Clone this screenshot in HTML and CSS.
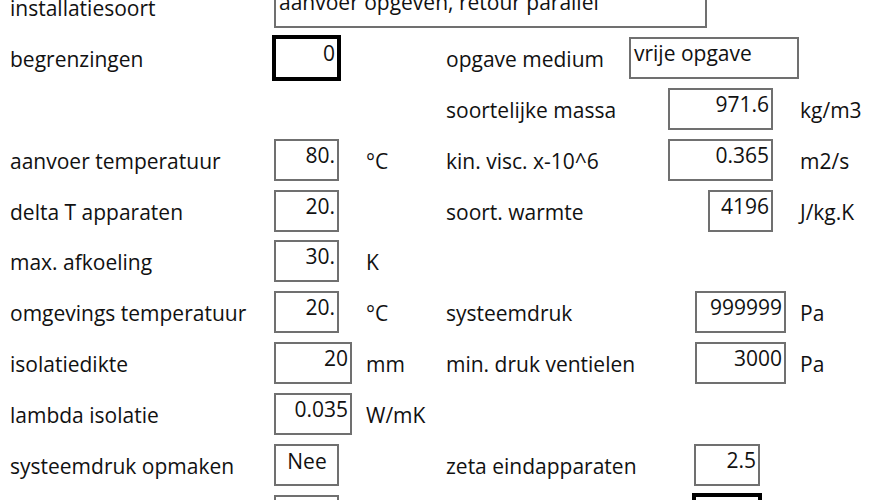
FILE: index.html
```html
<!DOCTYPE html>
<html>
<head>
<meta charset="utf-8">
<link rel="stylesheet" href="styles.css">
</head>
<body>
<div class="form">
  <div class="row">
    <span class="lbl c1">installatiesoort</span>
    <div class="box wide left c2s">aanvoer opgeven, retour parallel</div>
  </div>
  <div class="row">
    <span class="lbl c1">begrenzingen</span>
    <div class="box w65 focus c2">0</div>
    <span class="lbl c4">opgave medium</span>
    <div class="box w170 left c5">vrije opgave</div>
  </div>
  <div class="row">
    <span class="lbl c4">soortelijke massa</span>
    <div class="box w105 off39 c5">971.6</div>
    <span class="lbl c6">kg/m3</span>
  </div>
  <div class="row">
    <span class="lbl c1">aanvoer temperatuur</span>
    <div class="box w65 c2">80.</div>
    <span class="lbl c3">°C</span>
    <span class="lbl c4">kin. visc. x-10^6</span>
    <div class="box w105 off39 c5">0.365</div>
    <span class="lbl c6">m2/s</span>
  </div>
  <div class="row">
    <span class="lbl c1">delta T apparaten</span>
    <div class="box w65 c2">20.</div>
    <span class="lbl c4">soort. warmte</span>
    <div class="box w65 off79 c5">4196</div>
    <span class="lbl c6">J/kg.K</span>
  </div>
  <div class="row">
    <span class="lbl c1">max. afkoeling</span>
    <div class="box w65 c2">30.</div>
    <span class="lbl c3">K</span>
  </div>
  <div class="row">
    <span class="lbl c1">omgevings temperatuur</span>
    <div class="box w65 c2">20.</div>
    <span class="lbl c3">°C</span>
    <span class="lbl c4">systeemdruk</span>
    <div class="box w91 off66 c5">999999</div>
    <span class="lbl c6">Pa</span>
  </div>
  <div class="row">
    <span class="lbl c1">isolatiedikte</span>
    <div class="box w78 c2">20</div>
    <span class="lbl c3">mm</span>
    <span class="lbl c4">min. druk ventielen</span>
    <div class="box w91 off66 c5">3000</div>
    <span class="lbl c6">Pa</span>
  </div>
  <div class="row">
    <span class="lbl c1">lambda isolatie</span>
    <div class="box w78 c2">0.035</div>
    <span class="lbl c3">W/mK</span>
  </div>
  <div class="row">
    <span class="lbl c1">systeemdruk opmaken</span>
    <div class="box w65 center c2">Nee</div>
    <span class="lbl c4">zeta eindapparaten</span>
    <div class="box w66 off65 c5">2.5</div>
  </div>
  <div class="row">
    <div class="box w65 c2"></div>
    <div class="box w66 off65 focus c5"></div>
  </div>
</div>
</body>
</html>
```
FILE: styles.css
```css
html, body {
  margin: 0;
  padding: 0;
  background: #ffffff;
  overflow: hidden;
}
body {
  width: 888px;
  height: 500px;
  font-family: "Open Sans", "Noto Sans", sans-serif;
  font-size: 21px;
  color: #111111;
}
.form {
  margin-top: -14px;
  padding-left: 10px;
}
.row {
  display: grid;
  grid-template-columns: 264px 92px 80px 183px 171px 1fr;
  height: 42px;
  margin-bottom: 8.9px;
}
.lbl {
  line-height: 28px;
  padding-top: 8px;
  white-space: nowrap;
}
.c1 { grid-column: 1; }
.c2 { grid-column: 2; }
.c2s { grid-column: 2 / span 4; }
.c3 { grid-column: 3; }
.c4 { grid-column: 4; }
.c5 { grid-column: 5; }
.c6 { grid-column: 6; }
.box {
  box-sizing: border-box;
  height: 42px;
  border: 2px solid #707070;
  background: #fff;
  line-height: 28px;
  text-align: right;
  padding: 0 2px 0 3px;
  white-space: nowrap;
  overflow: hidden;
}
.box.left { text-align: left; padding-left: 3px; }
.box.center { text-align: center; padding-top: 1px; }
.box.focus {
  border-color: #000;
  box-shadow: 0 0 0 2px #000;
}
.wide { width: 433px; }
.w65 { width: 65px; }
.w66 { width: 66px; }
.w78 { width: 78px; }
.w91 { width: 91px; }
.w105 { width: 105px; }
.w170 { width: 170px; }
.off39 { margin-left: 39px; }
.off65 { margin-left: 65px; }
.off66 { margin-left: 66px; }
.off79 { margin-left: 79px; }
```
